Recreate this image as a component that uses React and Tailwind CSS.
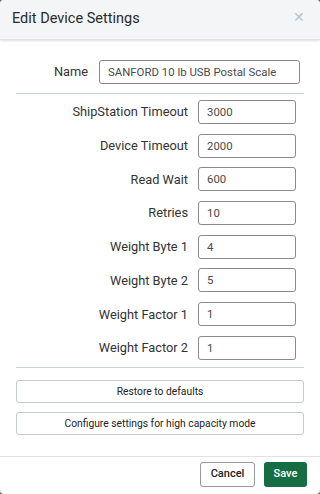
const rows = [
  ["ShipStation Timeout", "3000"],
  ["Device Timeout", "2000"],
  ["Read Wait", "600"],
  ["Retries", "10"],
  ["Weight Byte 1", "4"],
  ["Weight Byte 2", "5"],
  ["Weight Factor 1", "1"],
  ["Weight Factor 2", "1"],
];

const App = () => {
  return (
    <div className="w-[320px] h-[494px] bg-[#6b6b6b]" style={{ fontFamily: "Roboto, 'Liberation Sans', sans-serif" }}>
      <div className="w-full h-full bg-white rounded-[4px] overflow-hidden flex flex-col">
        {/* header */}
        <div className="h-[40px] shrink-0 bg-[#f3f5f7] border-b border-[#dde1e5] shadow-[0_1px_2px_rgba(0,0,0,0.12)] flex items-center justify-between pl-3 pr-[15px]">
          <h2 className="text-[14.5px] text-[#2a2a2a] leading-none">Edit Device Settings</h2>
          <span className="text-[#b9c4cf] text-[14px] leading-none -mt-[5px]">✕</span>
        </div>

        {/* body */}
        <div className="flex-1 px-4 pt-[20px]">
          <div className="flex items-center h-[24px]">
            <label className="w-[72px] text-right text-[12.8px] text-[#333]">Name</label>
            <input
              readOnly
              value="SANFORD 10 lb USB Postal Scale"
              className="ml-[11px] w-[201px] h-[24px] border border-[#8a8a8a] rounded-[3px] px-2 text-[11.4px] text-[#4a4a4a] outline-none"
            />
          </div>
          <div className="mt-[9px] border-t border-[#c9d0d6]" />

          <div className="pt-[6px] flex flex-col gap-[9.7px]">
            {rows.map(([label, value]) => (
              <div key={label} className="flex items-center h-[24px]">
                <label className="w-[172px] text-right text-[12.8px] text-[#333]">{label}</label>
                <input
                  readOnly
                  value={value}
                  className="ml-[10px] w-[98px] h-[24px] border border-[#8a8a8a] rounded-[3px] px-2 text-[11.4px] text-[#4a4a4a] outline-none"
                />
              </div>
            ))}
          </div>
          <div className="mt-[7px] border-t border-[#c9d0d6]" />

          <button className="mt-[12px] w-full h-[23px] border border-[#c6cbd0] rounded-[3px] text-[10.3px] text-[#222] bg-white">
            Restore to defaults
          </button>
          <button className="mt-[9px] w-full h-[23px] border border-[#c6cbd0] rounded-[3px] text-[10.3px] text-[#222] bg-white">
            Configure settings for high capacity mode
          </button>
        </div>

        {/* footer */}
        <div className="shrink-0 h-[38px] border-t border-[#dfe2e5] flex items-start justify-end gap-[9px] pt-[5px] pr-[13px]">
          <button className="h-[25px] w-[55px] border border-[#9a9a9a] rounded-[3px] text-[11px] font-medium text-[#222] bg-white">
            Cancel
          </button>
          <button className="h-[25px] w-[43px] rounded-[3px] text-[11px] font-medium text-white bg-[#156d43]">
            Save
          </button>
        </div>
      </div>
    </div>
  );
};

export default App;
